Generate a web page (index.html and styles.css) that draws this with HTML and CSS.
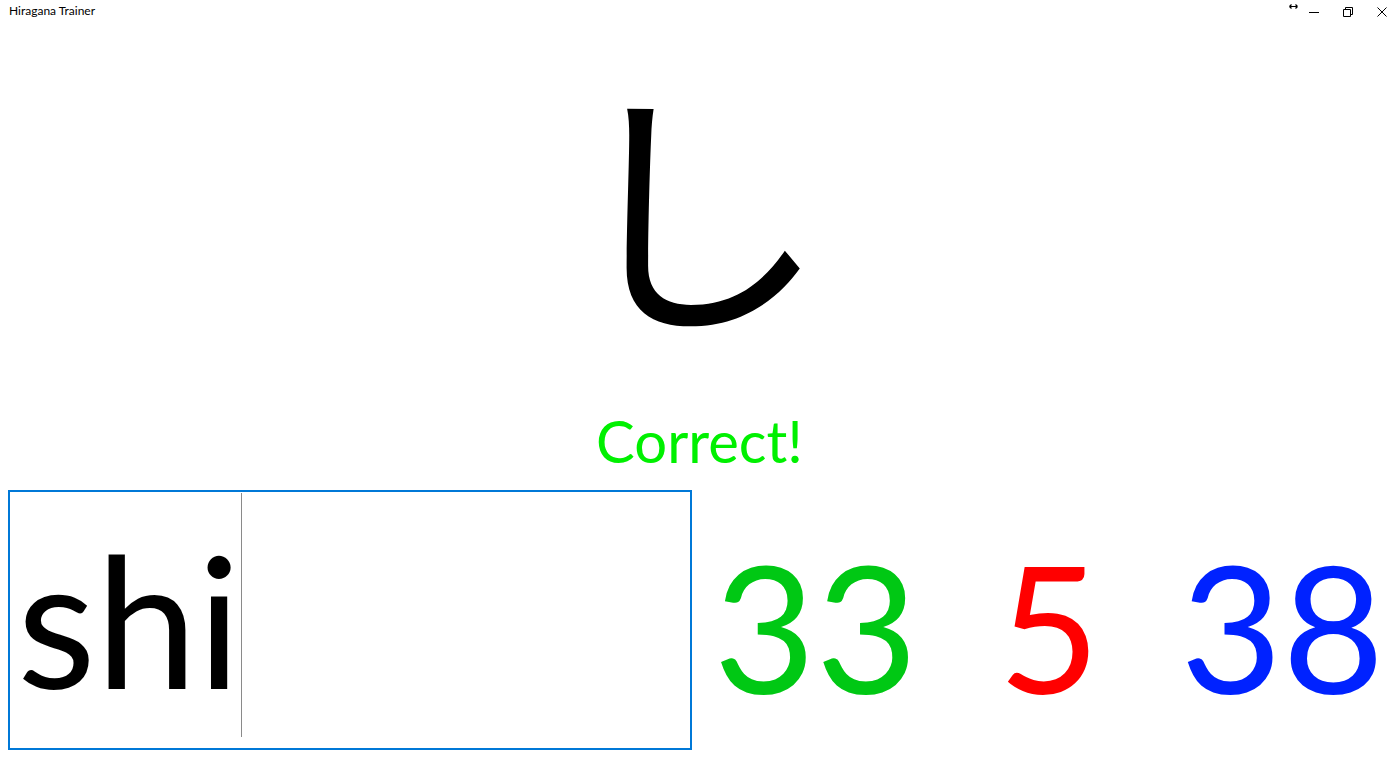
FILE: index.html
```html
<!DOCTYPE html>
<html lang="en">
<head>
<meta charset="utf-8">
<title>Hiragana Trainer</title>
<link rel="stylesheet" href="styles.css">
</head>
<body>
<div class="window">
  <header class="titlebar">
    <div class="title">Hiragana Trainer</div>
    <div class="caption">
      <div class="overlay-btn">
        <svg width="9" height="5" viewBox="0 0 9 5"><path d="M0.5 2.5H8.5M0.5 2.5L2.5 0.5M0.5 2.5L2.5 4.5M8.5 2.5L6.5 0.5M8.5 2.5L6.5 4.5" stroke="#000" stroke-width="1.2" fill="none"/></svg>
      </div>
      <div class="cap-btn">
        <svg width="10" height="10" viewBox="0 0 10 10"><path d="M0 5.5H10" stroke="#000" stroke-width="1" fill="none"/></svg>
      </div>
      <div class="cap-btn">
        <svg width="10" height="10" viewBox="0 0 10 10"><path d="M0.5 2.5H7.5V9.5H0.5Z M2.5 2.5V0.5H9.5V7.5H7.5" stroke="#000" stroke-width="1" fill="none"/></svg>
      </div>
      <div class="cap-btn">
        <svg width="10" height="10" viewBox="0 0 10 10"><path d="M0.5 0.5L9.5 9.5M9.5 0.5L0.5 9.5" stroke="#000" stroke-width="1" fill="none"/></svg>
      </div>
    </div>
  </header>
  <main class="content">
    <div class="kana">し</div>
    <div class="feedback">Correct!</div>
    <div class="bottom">
      <div class="input-cell">
        <div class="textbox"><span class="value">shi</span><span class="caret"></span></div>
      </div>
      <div class="scores">
        <div class="score correct">33</div>
        <div class="score wrong">5</div>
        <div class="score total">38</div>
      </div>
    </div>
  </main>
</div>
</body>
</html>
```

FILE: styles.css
```css
html, body {
  margin: 0;
  padding: 0;
  background: #fff;
}
body {
  font-family: Lato, "Noto Sans CJK JP", sans-serif;
  color: #000;
}
.window {
  width: 1399px;
  height: 758px;
  overflow: hidden;
  display: flex;
  flex-direction: column;
}
.titlebar {
  height: 32px;
  flex: none;
  display: flex;
  justify-content: space-between;
  align-items: flex-start;
}
.title {
  font-size: 12px;
  line-height: 12px;
  padding: 5px 0 0 9px;
}
.caption {
  display: flex;
  align-items: flex-start;
}
.overlay-btn {
  width: 10px;
  height: 10px;
  padding: 4px 0 0 0;
  margin-right: -1px;
  display: flex;
  justify-content: center;
}
.cap-btn {
  width: 34px;
  height: 24px;
  display: flex;
  align-items: center;
  justify-content: center;
}
.content {
  flex: 1;
  display: flex;
  flex-direction: column;
}
.kana {
  height: 340px;
  flex: none;
  font-family: "Noto Sans CJK JP", sans-serif;
  font-size: 262px;
  line-height: 1;
  text-align: center;
  padding-top: 36px;
  padding-right: 8px;
  box-sizing: border-box;
}
.feedback {
  height: 118px;
  flex: none;
  font-size: 58px;
  line-height: 1;
  color: #00f000;
  text-align: center;
  box-sizing: border-box;
  padding-top: 40px;
}
.bottom {
  flex: 1;
  display: grid;
  grid-template-columns: 699px 1fr;
}
.input-cell {
  padding: 0 7px 8px 8px;
  display: flex;
}
.textbox {
  flex: 1;
  border: 2px solid #0078d7;
  display: flex;
  align-items: flex-start;
  padding-left: 7px;
}
.value {
  font-size: 182px;
  line-height: 1;
  padding-top: 36px;
}
.caret {
  width: 1px;
  height: 244px;
  margin-top: 1px;
  margin-left: 0;
  background: #8a8a8a;
}
.scores {
  display: grid;
  grid-template-columns: repeat(3, 1fr);
}
.score {
  font-size: 176px;
  line-height: 1;
  text-align: center;
  padding-top: 48px;
}
.correct { color: #00c814; }
.wrong { color: #ff0000; }
.total { color: #0022ff; }
```
